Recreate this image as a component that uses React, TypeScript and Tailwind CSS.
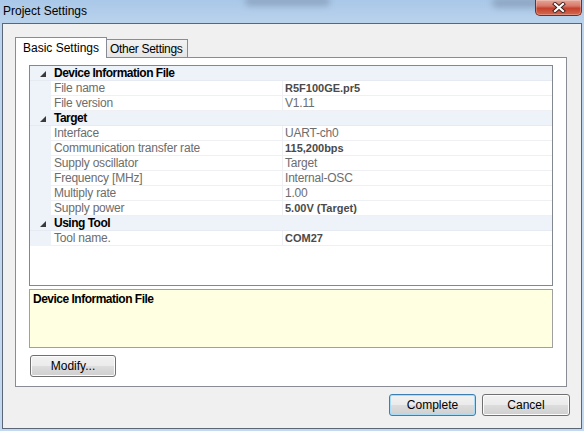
import React from "react";

type Row = { h?: string; n?: string; v?: string; b?: boolean };

const rows: Row[] = [
  { h: "Device Information File" },
  { n: "File name", v: "R5F100GE.pr5", b: true },
  { n: "File version", v: "V1.11" },
  { h: "Target" },
  { n: "Interface", v: "UART-ch0" },
  { n: "Communication transfer rate", v: "115,200bps", b: true },
  { n: "Supply oscillator", v: "Target" },
  { n: "Frequency [MHz]", v: "Internal-OSC" },
  { n: "Multiply rate", v: "1.00" },
  { n: "Supply power", v: "5.00V (Target)", b: true },
  { h: "Using Tool" },
  { n: "Tool name.", v: "COM27", b: true },
];

function Tri() {
  return (
    <svg width="6" height="6" viewBox="0 0 6 6" className="block">
      <polygon points="6,0 6,6 0,6" fill="#3a3a3a" />
    </svg>
  );
}

function Btn({ label, w, def }: { label: string; w: string; def?: boolean }) {
  return (
    <div
      className={
        "h-[22px] rounded-[3px] border flex items-center justify-center text-[12px] leading-none text-black whitespace-nowrap bg-[linear-gradient(180deg,#f2f2f2_0%,#ebebeb_50%,#dddddd_50%,#cfcfcf_100%)] " +
        w +
        (def
          ? " border-[#3c7fb1] shadow-[inset_0_0_0_1px_#a8dcf6]"
          : " border-[#707070] shadow-[inset_0_0_0_1px_#fcfcfc]")
      }
    >
      {label}
    </div>
  );
}

export default function App() {
  return (
    <div className="w-[584px] h-[431px] overflow-hidden relative bg-[linear-gradient(180deg,#a9c7e8_0%,#bcd4ed_6%,#c3d9f0_100%)] font-['Liberation_Sans',Arial,sans-serif] select-none">
      {/* blurred background-window text behind glass */}
      <div className="absolute left-[245px] top-[-3px] w-[85px] h-[9px] rounded-full bg-[#4b5a6e] opacity-30 blur-[3px]" />
      <div className="absolute left-[492px] top-[-2px] w-[55px] h-[10px] rounded-full bg-[#4b5a6e] opacity-30 blur-[3px]" />

      {/* title bar */}
      <div className="h-[23px] flex items-center pl-[3px] text-[12px] text-black relative whitespace-nowrap">
        <span className="leading-none -mt-[1px]">Project Settings</span>
      </div>
      {/* close button */}
      <div className="absolute left-[535px] top-0 w-[47px] h-[16px] rounded-b-[5px] border border-t-0 border-[#7a2b21] bg-[linear-gradient(180deg,#e7a597_0%,#d8786a_40%,#c5412c_55%,#d26a54_100%)] flex items-center justify-center shadow-[inset_0_0_0_1px_rgba(255,255,255,0.25)]">
        <svg width="14" height="11" viewBox="0 0 14 11">
          <path d="M3 2 L11 9 M11 2 L3 9" stroke="#3b1f1b" strokeWidth="4" strokeLinecap="square" />
          <path d="M3 2 L11 9 M11 2 L3 9" stroke="#ffffff" strokeWidth="2.2" strokeLinecap="square" />
        </svg>
      </div>

      {/* window body */}
      <div className="ml-[2px] w-[580px] h-[406px] border border-[#5b6776] bg-[#f0f0f0] flex flex-col pt-[13px] pl-[12px] pr-[13px]">
        {/* tabs */}
        <div className="flex items-end h-[20px] text-[12px] leading-none text-black whitespace-nowrap">
          <div className="relative z-10 -mb-px h-[21px] w-[92px] border border-b-0 border-[#898c95] bg-white flex items-start pt-[4px] pl-[7px]">
            Basic Settings
          </div>
          <div className="-ml-px h-[18px] w-[82px] border border-b-0 border-[#898c95] bg-[linear-gradient(180deg,#f2f2f2_0%,#e6e6e6_100%)] flex items-start pt-[3px] pl-[3px] tracking-[-0.3px]">
            Other Settings
          </div>
        </div>

        {/* tab panel */}
        <div className="w-[552px] h-[330px] border border-[#898c95] bg-white pt-[7px] px-[13px] flex flex-col">
          {/* property grid */}
          <div className="h-[221px] border border-[#828790] bg-white flex flex-col">
            {rows.map((r, i) =>
              r.h ? (
                <div key={i} className="h-[15px] shrink-0 flex items-center bg-[#eef2f9] border-b border-[#e6ebf3]">
                  <div className="w-[24px] flex justify-center pl-[1px] mt-[1px]">
                    <Tri />
                  </div>
                  <span className="text-[12px] font-bold text-black tracking-[-0.5px] leading-none whitespace-nowrap">{r.h}</span>
                </div>
              ) : (
                <div key={i} className="h-[15px] shrink-0 flex">
                  <div className="w-[21px] bg-[#eef2f9]" />
                  <div className="w-[232px] border-b border-r border-[#eef0f4] flex items-center pl-[3px] text-[12px] text-[#6d6d6d] tracking-[-0.2px] leading-none whitespace-nowrap">
                    {r.n}
                  </div>
                  <div
                    className={
                      "flex-1 border-b border-[#eef0f4] flex items-center pl-[2px] leading-none whitespace-nowrap " +
                      (r.b
                        ? "text-[11px] font-bold text-[#4a4a4a]"
                        : "text-[12px] text-[#6d6d6d] tracking-[-0.2px]")
                    }
                  >
                    {r.v}
                  </div>
                </div>
              )
            )}
          </div>

          {/* description */}
          <div className="mt-[3px] h-[59px] border border-[#a0a0a0] bg-[#ffffe1] pl-[3px] pt-[3px] text-[12px] leading-[12px]">
            <span className="font-bold text-black tracking-[-0.5px] whitespace-nowrap">Device Information File</span>
          </div>

          <div className="mt-[7px] pl-px">
            <Btn label="Modify..." w="w-[86px]" />
          </div>
        </div>

        {/* bottom buttons */}
        <div className="mt-[7px] flex justify-end gap-[6px] -mr-[2px]">
          <Btn label="Complete" w="w-[87px]" def />
          <Btn label="Cancel" w="w-[88px]" />
        </div>
      </div>
    </div>
  );
}
